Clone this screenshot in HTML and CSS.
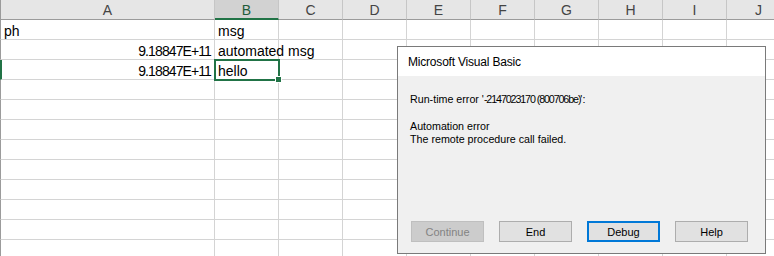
FILE: index.html
```html
<!DOCTYPE html>
<html>
<head>
<meta charset="utf-8">
<link rel="stylesheet" href="styles.css">
</head>
<body>
<div class="sheet">
  <div class="row head">
    <div class="c a hc">A</div><div class="c hc sel">B</div><div class="c hc">C</div><div class="c hc">D</div><div class="c hc">E</div><div class="c hc">F</div><div class="c hc">G</div><div class="c hc">H</div><div class="c hc">I</div><div class="c hc">J</div>
  </div>
  <div class="row">
    <div class="c a">ph</div><div class="c">msg</div><div class="c"></div><div class="c"></div><div class="c"></div><div class="c"></div><div class="c"></div><div class="c"></div><div class="c"></div><div class="c"></div>
  </div>
  <div class="row">
    <div class="c a num">9.18847E+11</div><div class="c ovf">automated msg</div><div class="c"></div><div class="c"></div><div class="c"></div><div class="c"></div><div class="c"></div><div class="c"></div><div class="c"></div><div class="c"></div>
  </div>
  <div class="row active">
    <div class="c a num">9.18847E+11</div><div class="c cur">hello<span class="handle"></span></div><div class="c"></div><div class="c"></div><div class="c"></div><div class="c"></div><div class="c"></div><div class="c"></div><div class="c"></div><div class="c"></div>
  </div>
  <div class="row"><div class="c a"></div><div class="c"></div><div class="c"></div><div class="c"></div><div class="c"></div><div class="c"></div><div class="c"></div><div class="c"></div><div class="c"></div><div class="c"></div></div>
  <div class="row"><div class="c a"></div><div class="c"></div><div class="c"></div><div class="c"></div><div class="c"></div><div class="c"></div><div class="c"></div><div class="c"></div><div class="c"></div><div class="c"></div></div>
  <div class="row"><div class="c a"></div><div class="c"></div><div class="c"></div><div class="c"></div><div class="c"></div><div class="c"></div><div class="c"></div><div class="c"></div><div class="c"></div><div class="c"></div></div>
  <div class="row"><div class="c a"></div><div class="c"></div><div class="c"></div><div class="c"></div><div class="c"></div><div class="c"></div><div class="c"></div><div class="c"></div><div class="c"></div><div class="c"></div></div>
  <div class="row"><div class="c a"></div><div class="c"></div><div class="c"></div><div class="c"></div><div class="c"></div><div class="c"></div><div class="c"></div><div class="c"></div><div class="c"></div><div class="c"></div></div>
  <div class="row"><div class="c a"></div><div class="c"></div><div class="c"></div><div class="c"></div><div class="c"></div><div class="c"></div><div class="c"></div><div class="c"></div><div class="c"></div><div class="c"></div></div>
  <div class="row"><div class="c a"></div><div class="c"></div><div class="c"></div><div class="c"></div><div class="c"></div><div class="c"></div><div class="c"></div><div class="c"></div><div class="c"></div><div class="c"></div></div>
  <div class="row"><div class="c a"></div><div class="c"></div><div class="c"></div><div class="c"></div><div class="c"></div><div class="c"></div><div class="c"></div><div class="c"></div><div class="c"></div><div class="c"></div></div>
  <div class="row"><div class="c a"></div><div class="c"></div><div class="c"></div><div class="c"></div><div class="c"></div><div class="c"></div><div class="c"></div><div class="c"></div><div class="c"></div><div class="c"></div></div>
</div>

<div class="dialog">
  <div class="title">Microsoft Visual Basic</div>
  <div class="body">
    <p class="msg">Run-time error '<span class="code">-2147023170 (800706be)</span>':</p>
    <p class="msg">Automation error<br>The remote procedure call failed.</p>
  </div>
  <div class="buttons">
    <button class="btn disabled">Continue</button>
    <button class="btn">End</button>
    <button class="btn default">Debug</button>
    <button class="btn">Help</button>
  </div>
</div>
</body>
</html>
```

FILE: styles.css
```css
html, body {
  margin: 0;
  padding: 0;
  width: 774px;
  height: 256px;
  overflow: hidden;
  background: #ffffff;
}

.sheet {
  font-family: "Liberation Sans", Arial, sans-serif;
  font-size: 14px;
  color: #000;
  width: 800px;
}

.row {
  display: grid;
  grid-template-columns: 215px repeat(9, 64px);
  height: 20px;
}

.c {
  box-sizing: border-box;
  height: 20px;
  border-right: 1px solid #d4d4d4;
  border-bottom: 1px solid #d4d4d4;
  padding: 2px 3px 0 3px;
  line-height: 19px;
  white-space: nowrap;
  position: relative;
}

.c.a {
  border-left: 1px solid #9b9b9b;
  padding-left: 3px;
}

.row.active .c.a {
  border-left: 2px solid #217346;
}

.head .c {
  background: #e6e6e6;
  border-right: 1px solid #c6c6c6;
  border-bottom: 1px solid #9b9b9b;
  text-align: center;
  color: #444;
  padding-top: 1px;
  line-height: 19px;
}

.head .c.sel {
  background: #d2d2d2;
  border-bottom: 2px solid #217346;
  color: #1e5c3a;
}

.num {
  text-align: right;
  padding-right: 3px;
  letter-spacing: -0.9px;
}

.ovf {
  overflow: visible;
  z-index: 1;
}

.cur {
  outline: 2px solid #217346;
  outline-offset: -1px;
  z-index: 2;
}

.handle {
  position: absolute;
  right: -4px;
  bottom: -4px;
  width: 5px;
  height: 5px;
  background: #217346;
  border: 1px solid #fff;
}

.dialog {
  position: absolute;
  left: 397px;
  top: 46px;
  width: 369px;
  height: 208px;
  box-sizing: border-box;
  border: 1px solid #7a7a7a;
  background: #f0f0f0;
  display: flex;
  flex-direction: column;
  font-family: "Liberation Sans", Arial, sans-serif;
  font-size: 12px;
  color: #000;
  z-index: 5;
}

.title {
  height: 29px;
  background: #ffffff;
  padding-left: 10px;
  line-height: 31px;
  font-size: 12px;
  letter-spacing: -0.2px;
}

.body {
  flex: 1;
  padding: 17px 12px 0 12px;
  font-size: 10.7px;
}

.msg {
  margin: 0 0 14px 0;
  line-height: 13px;
}

.code {
  letter-spacing: -1.1px;
}

.buttons {
  display: flex;
  gap: 15px;
  padding: 0 0 11px 13px;
}

.btn {
  width: 73px;
  height: 21px;
  box-sizing: border-box;
  background: #e1e1e1;
  border: 1px solid #adadad;
  font-family: "Liberation Sans", Arial, sans-serif;
  font-size: 11px;
  color: #000;
  padding: 0;
  margin: 0;
}

.btn.disabled {
  background: #cccccc;
  border-color: #bfbfbf;
  color: #838383;
}

.btn.default {
  border: 2px solid #0078d7;
}
```
